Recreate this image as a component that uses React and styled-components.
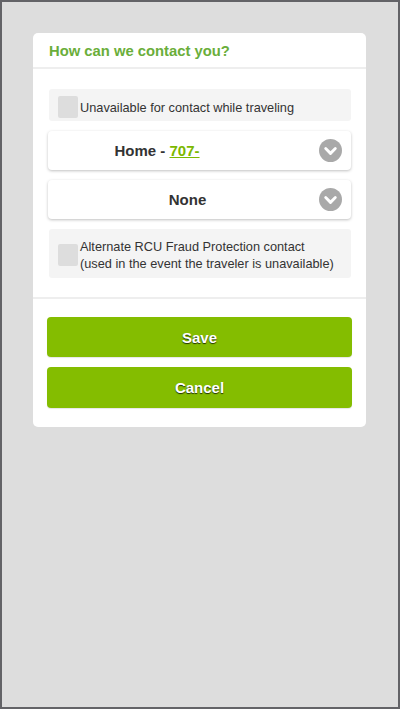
import styled, { createGlobalStyle } from 'styled-components';

const GlobalStyle = createGlobalStyle`
  html, body {
    margin: 0;
    padding: 0;
  }
  body {
    font-family: "Liberation Sans", Arial, sans-serif;
  }
`;

const ChevronCircle = () => (
  <svg width="23" height="23" viewBox="0 0 24 24">
    <circle cx="12" cy="12" r="12" fill="#a9a9a9" />
    <path
      d="M7 10L12 15L17 10"
      fill="none"
      stroke="#fff"
      strokeWidth="3"
      strokeLinecap="round"
      strokeLinejoin="round"
    />
  </svg>
);

const App = () => {
  return (
    <>
      <GlobalStyle />
      <Screen>
        <Card>
          <CardHeader>How can we contact you?</CardHeader>
          <Fields>
            <CheckRow>
              <CheckBox />
              <CheckLabel>Unavailable for contact while traveling</CheckLabel>
            </CheckRow>
            <Select>
              <Value>
                <ValueText width="146px">
                  Home - <Phone>707-</Phone>
                </ValueText>
              </Value>
              <ChevronCircle />
            </Select>
            <Select>
              <Value>
                <ValueText>None</ValueText>
              </Value>
              <ChevronCircle />
            </Select>
            <CheckRow tall>
              <CheckBox />
              <CheckLabel>
                Alternate RCU Fraud Protection contact
                <br />
                (used in the event the traveler is unavailable)
              </CheckLabel>
            </CheckRow>
          </Fields>
          <Actions>
            <ActionButton>Save</ActionButton>
            <ActionButton tall>Cancel</ActionButton>
          </Actions>
        </Card>
      </Screen>
    </>
  );
};

export default App;

const Screen = styled.div`
  box-sizing: border-box;
  width: 400px;
  height: 709px;
  border: 2px solid #636367;
  background: #dddddd;
  padding: 31px 32px 0 31px;
`;

const Card = styled.div`
  background: #ffffff;
  border-radius: 5px;
  width: 333px;
  overflow: hidden;
`;

const CardHeader = styled.div`
  box-sizing: border-box;
  height: 36px;
  display: flex;
  align-items: center;
  padding: 1px 16px 0;
  color: #6aae3a;
  font-size: 14.8px;
  font-weight: 700;
  border-bottom: 2px solid #eeeeee;
`;

const Fields = styled.div`
  display: flex;
  flex-direction: column;
  gap: 10px;
  padding: 20px 15px 19px 15px;
  border-bottom: 2px solid #eeeeee;
`;

const CheckRow = styled.div`
  box-sizing: border-box;
  display: flex;
  align-items: center;
  gap: 2px;
  height: ${(props) => (props.tall ? '49px' : '32px')};
  margin-left: 1px;
  padding: ${(props) => (props.tall ? '2px 0 0 9px' : '4px 0 0 9px')};
  background: #f4f4f4;
  border-radius: 3px;
`;

const CheckBox = styled.div`
  flex: none;
  width: 20px;
  height: 22px;
  border-radius: 2px;
  background: #dddddd;
`;

const CheckLabel = styled.div`
  color: #333333;
  font-size: 12.75px;
  line-height: 17px;
`;

const Select = styled.div`
  box-sizing: border-box;
  height: 39px;
  display: flex;
  align-items: center;
  padding: 0 9px 0 8px;
  background: #ffffff;
  border-radius: 4px;
  box-shadow: 0 1px 3px rgba(0, 0, 0, 0.25);
`;

const Value = styled.div`
  flex: 1;
  display: flex;
  justify-content: center;
`;

const ValueText = styled.span`
  width: ${(props) => props.width || 'auto'};
  color: #333333;
  font-size: 15px;
  font-weight: 700;
  white-space: pre;
`;

const Phone = styled.span`
  color: #7cb800;
  text-decoration: underline;
`;

const Actions = styled.div`
  display: flex;
  flex-direction: column;
  gap: 10px;
  padding: 18px 14px 19px 14px;
`;

const ActionButton = styled.button`
  height: ${(props) => (props.tall ? '41px' : '40px')};
  border: none;
  border-radius: 4px;
  background: #84bd00;
  color: #ffffff;
  font-family: "Liberation Sans", Arial, sans-serif;
  font-size: 15px;
  font-weight: 700;
  text-shadow: 0 1px 1px rgba(0, 0, 0, 0.75);
  box-shadow: 0 1px 1px rgba(0, 0, 0, 0.1);
`;
